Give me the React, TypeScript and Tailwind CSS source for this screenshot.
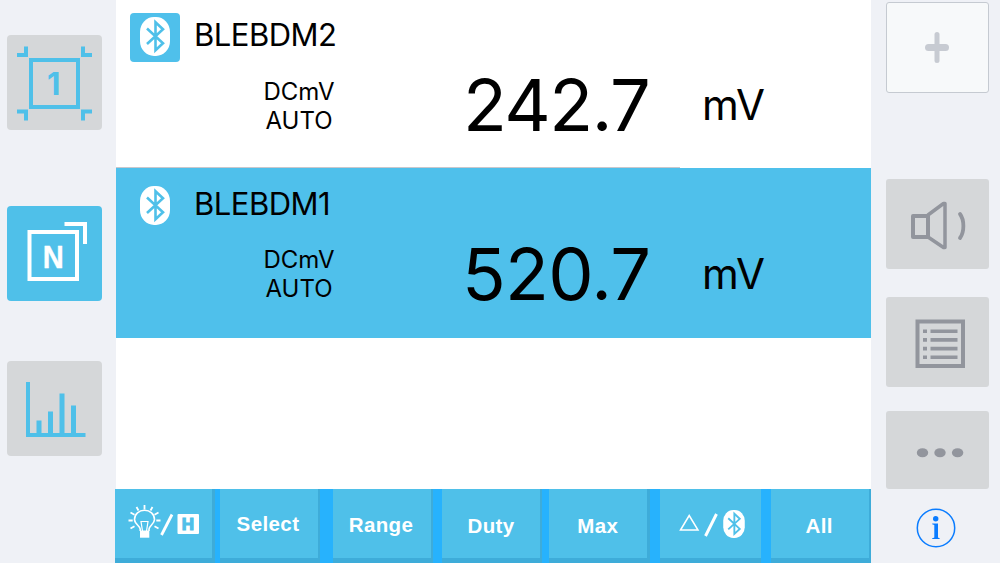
import type { ReactNode } from "react";

function BluetoothBadge({ className }: { className: string }) {
  return (
    <svg className={className} viewBox="0 0 30 39" fill="none">
      <rect width="30" height="39" rx="14" ry="15" fill="#fff" />
      <path
        d="M7 11.5 L23 26.300 L15.500 33.300 V5.200 L23 12.300 L7 27"
        stroke="#4fc0e9"
        strokeWidth="2.600"
      />
    </svg>
  );
}

interface Reading {
  name: string;
  mode: string;
  range: string;
  value: string;
  unit: string;
  active: boolean;
}

const readings: Reading[] = [
  { name: "BLEBDM2", mode: "DCmV", range: "AUTO", value: "242.7", unit: "mV", active: false },
  { name: "BLEBDM1", mode: "DCmV", range: "AUTO", value: "520.7", unit: "mV", active: true },
];

function ReadingRow({ r }: { r: Reading }) {
  return (
    <div className={r.active ? "h-[170px] bg-[#4fc0eb] pt-[13px]" : "h-[168px] bg-white pt-3"}>
      <div className="flex h-[50px] pl-[14px]">
        <div className="mt-[0.500px] flex h-[49px] w-[50px] items-center justify-center rounded-sm bg-[#4fc0eb] pb-0.5">
          <BluetoothBadge className="h-[39px] w-[30px]" />
        </div>
        <div className="ml-3.5 h-[46px] text-[31px] leading-[46px] tracking-[-0.500px]">{r.name}</div>
      </div>
      <div className="flex h-[90px] pt-[14px]">
        <div className={`w-[246px] pl-[120px] text-center text-[24px] leading-[29px] ${r.active ? "pt-0" : "pt-[0.500px]"}`}>
          <div>{r.mode}</div>
          <div>{r.range}</div>
        </div>
        <div
          className={
            r.active
              ? "ml-[100px] w-[240px] text-[72px] leading-[58px] tracking-[-0.700px]"
              : "ml-[101px] w-[239px] text-[72px] leading-[58px] tracking-[-1.500px]"
          }
        >
          {r.value}
        </div>
        <div className="text-[42px] leading-[58px] tracking-[-0.600px]">{r.unit}</div>
      </div>
      {!r.active && <div className="mt-[15px] h-px w-[564px] bg-[#c8c7cc]" />}
    </div>
  );
}

function SideButton({ active, className, children }: { active?: boolean; className: string; children: ReactNode }) {
  return (
    <button className={`block h-[95px] w-[95px] rounded-[4px] ${active ? "bg-[#4fc0e9]" : "bg-[#d5d7d9]"} ${className}`}>
      {children}
    </button>
  );
}

function SingleIcon() {
  return (
    <svg className="h-[95px] w-[95px]" viewBox="0 0 95 95" fill="none" stroke="#4fc0e9">
      <rect x="24" y="25" width="47" height="47" strokeWidth="4" />
      <path d="M10 20H19V11.500M85 20H76V11.500M10 76.500H19V85.500M85 76.500H76V85.500" strokeWidth="4" />
      <text x="46.800" y="59.500" textAnchor="middle" stroke="none" fill="#4fc0e9" fontSize="31" fontWeight="700" fontFamily="Inter, sans-serif">
        1
      </text>
    </svg>
  );
}

function MultiIcon() {
  return (
    <svg className="h-[95px] w-[95px]" viewBox="0 0 95 95" fill="none" stroke="#fff">
      <rect x="22.500" y="26" width="47.500" height="47" strokeWidth="4" />
      <path d="M57.500 18H78V38" strokeWidth="4" />
      <text x="35.800" y="61.500" textLength="21" lengthAdjust="spacingAndGlyphs" stroke="#fff" strokeWidth="0.400" fill="#fff" fontSize="32" fontWeight="700" fontFamily="Liberation Sans, sans-serif">
        N
      </text>
    </svg>
  );
}

function ChartIcon() {
  return (
    <svg className="h-[95px] w-[95px]" viewBox="0 0 95 95" fill="#4fc0e9">
      <path d="M19 21h4v51h55.500v4H19zM29.500 59.500h5V73h-5zM41 50.500h5V73h-5zM52.500 32.500h5V73h-5zM64 44.500h5V73h-5z" />
    </svg>
  );
}

function SpeakerIcon() {
  return (
    <svg className="h-[90px] w-[103px]" viewBox="0 0 103 90" fill="none" stroke="#92959d" strokeLinejoin="round" strokeLinecap="round">
      <path d="M27 37H42V58H27Z" strokeWidth="4" />
      <path d="M42 36L57.500 24.500H59V68.500H57.500L42 58" strokeWidth="3.500" />
      <path d="M74 35C78.500 41 78.500 53 74 59" strokeWidth="3.800" />
    </svg>
  );
}

function ListIcon() {
  return (
    <svg className="h-[90px] w-[103px]" viewBox="0 0 103 90" fill="none" stroke="#92959d">
      <rect x="31.500" y="24.500" width="45.500" height="44.500" strokeWidth="4" />
      <path d="M37 34.200h4M37 42.900h4M37 51.600h4M37 60.300h4M44.500 34.200H71.500M44.500 42.900H71.500M44.500 51.600H71.500M44.500 60.300H71.500" strokeWidth="3.600" />
    </svg>
  );
}

function BulbHoldIcon() {
  return (
    <svg className="h-[69px] w-[97px]" viewBox="0 0 97 69" fill="none" stroke="#fff">
      <path d="M25.200 42V40C25.200 37 19.500 35 19.500 30.500C19.500 25 24 21.200 29.500 21.200S39.500 25 39.500 30.500C39.500 35 34 37 34 40V42" strokeWidth="1.600" />
      <path d="M27.500 42L26 32.500H33L31.500 42" strokeWidth="1.200" />
      <path d="M25 41.500h9.300v7.200h-9.300z" fill="#fff" stroke="none" />
      <path d="M29.500 16v4.500M21.500 18l2 3.500M37.500 18l-2 3.500M15.500 23.500l4 2.200M43.500 23.500l-4 2.200M13.500 31.500h4.200M45.500 31.500h-4.200M15.500 39.500l4-2.200M43.500 39.500l-4-2.200" strokeWidth="1.800" />
      <path d="M46.500 46L57 25.500" strokeWidth="2.800" />
      <rect x="62.500" y="25" width="21.500" height="20" rx="1" fill="#fff" stroke="none" />
      <text x="73.200" y="41" textAnchor="middle" stroke="#4fc0e9" strokeWidth="1.200" fill="#4fc0e9" fontSize="17" fontWeight="700" fontFamily="Liberation Sans, sans-serif">
        H
      </text>
    </svg>
  );
}

function RelativeIcon() {
  return (
    <div className="relative h-[69px] w-[101px]">
      <svg className="h-[69px] w-[101px]" viewBox="0 0 101 69" fill="none" stroke="#fff">
        <path d="M20.500 41L29.200 26.500L38 41Z" strokeWidth="1.500" />
        <path d="M45.500 47L56.500 25" strokeWidth="3" />
      </svg>
      <BluetoothBadge className="absolute top-[21px] left-[63px] h-[28px] w-[22px]" />
    </div>
  );
}

function Key({ className, children }: { className: string; children: ReactNode }) {
  return (
    <button
      className={`h-[74px] shrink-0 border-b-[5px] border-r-[#3eacd9] border-b-[#3eacd9] bg-[#4fc0e9] text-center font-['Liberation_Sans',Arial,sans-serif] text-[20.500px] font-bold tracking-[0.400px] text-white ${className}`}
    >
      {children}
    </button>
  );
}

export default function App() {
  return (
    <div className="flex h-[563px] w-[1000px] overflow-hidden bg-[#eff1f6] font-['Inter',sans-serif] text-black">
      <aside className="flex w-[116px] shrink-0 flex-col pl-[7px]">
        <SideButton className="mt-[35px]"><SingleIcon /></SideButton>
        <SideButton active className="mt-[76px]"><MultiIcon /></SideButton>
        <SideButton className="mt-[60px]"><ChartIcon /></SideButton>
      </aside>
      <main className="flex w-[755.400px] shrink-0 flex-col bg-white">
        {readings.map((r) => (
          <ReadingRow key={r.name} r={r} />
        ))}
        <div className="h-[151px]" />
        <nav className="-ml-[1.500px] flex h-[74px] bg-[#27b2fd]">
          <Key className="mr-[5px] w-[100.500px] border-r-[3px]"><BulbHoldIcon /></Key>
          <Key className="mr-[13px] w-[100px] border-r-2 pt-[2px] pr-[2px]">Select</Key>
          <Key className="mr-[9px] w-[100px] border-r-2 pt-[3px] pr-[2px]">Range</Key>
          <Key className="mr-[7px] w-[100px] border-r-2 pt-[6px]">Duty</Key>
          <Key className="mr-[10.500px] w-[100.500px] border-r-[3px] pt-[5px]">Max</Key>
          <Key className="mr-[10px] w-[101px]"><RelativeIcon /></Key>
          <Key className="w-[100.400px] border-r-2 pt-[5px] pr-[2px]">All</Key>
        </nav>
      </main>
      <aside className="flex flex-col pl-[14.600px]">
        <button className="mt-0.5 flex h-[91px] w-[103px] items-center justify-center rounded-[3px] border border-[#c5cad1] bg-[#f7f9fa]">
          <svg className="h-[31px] w-[24px]" viewBox="0 0 24 31" stroke="#c7cbd2" strokeLinecap="round">
            <path d="M12 2.500V28.500" strokeWidth="5" />
            <path d="M3.500 15.500H20.500" strokeWidth="7" />
          </svg>
        </button>
        <button className="mt-[86px] h-[90px] w-[103px] rounded-[3px] bg-[#d5d7d9]"><SpeakerIcon /></button>
        <button className="mt-[28px] h-[90px] w-[103px] rounded-[3px] bg-[#d5d7d9]"><ListIcon /></button>
        <button className="mt-[24px] h-[78px] w-[103px] rounded-[3px] bg-[#d5d7d9]">
          <svg className="h-[78px] w-[103px]" viewBox="0 0 103 78" fill="#92959d">
            <ellipse cx="36.500" cy="41.700" rx="5.700" ry="4.500" />
            <ellipse cx="54" cy="41.700" rx="5.700" ry="4.500" />
            <ellipse cx="71.600" cy="41.700" rx="5.700" ry="4.500" />
          </svg>
        </button>
        <svg className="mt-[19px] ml-[30.500px] h-[40px] w-[40px]" viewBox="0 0 40 40" fill="none">
          <circle cx="20" cy="20" r="18.700" stroke="#0a7cff" strokeWidth="1.500" />
          <circle cx="19.700" cy="10.800" r="2.700" fill="#0a7cff" />
          <path d="M16.200 15.500H22V29.500L23.800 30.500V31H16V30.500L18.300 29.500V17L16.200 16.200Z" fill="#0a7cff" />
        </svg>
      </aside>
    </div>
  );
}
